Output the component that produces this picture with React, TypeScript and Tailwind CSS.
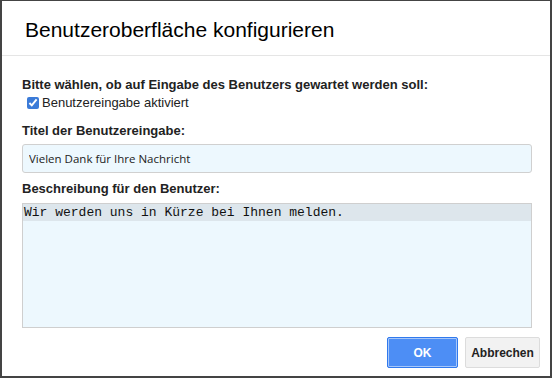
import { useState } from 'react'

export default function App() {
  const [enabled, setEnabled] = useState(true)
  const [title, setTitle] = useState('Vielen Dank für Ihre Nachricht')
  const [desc, setDesc] = useState('Wir werden uns in Kürze bei Ihnen melden.')

  return (
    <div className="w-[552px] h-[378px] bg-white border-2 border-t border-[#444] flex flex-col font-['Liberation_Sans',Arial,sans-serif] text-[#222]">
      {/* Header */}
      <div className="h-[55px] border-b border-[#e5e5e5] flex items-center px-[23px]">
        <h1 className="text-[21px] text-black leading-none pt-[3px]">Benutzeroberfläche konfigurieren</h1>
      </div>

      {/* Body */}
      <div className="flex flex-col px-[20px] pt-[21px]">
        <label className="text-[13px] font-bold leading-[16px]">
          Bitte wählen, ob auf Eingabe des Benutzers gewartet werden soll:
        </label>
        <label className="flex items-center gap-[3px] pl-[5px] mt-[2px] text-[13px] leading-[16px]">
          <input
            type="checkbox"
            checked={enabled}
            onChange={(e) => setEnabled(e.target.checked)}
            className="w-[12px] h-[12px] m-0 accent-[#3b7bd8]"
          />
          Benutzereingabe aktiviert
        </label>

        <label className="text-[13px] font-bold leading-[16px] mt-[12px]">Titel der Benutzereingabe:</label>
        <input
          type="text"
          value={title}
          onChange={(e) => setTitle(e.target.value)}
          className="mt-[5px] w-[510px] h-[29px] px-[6px] rounded-[3px] border border-[#d0d0d0] bg-[#edf8fe] text-[11.5px] text-[#222] font-['Open_Sans',sans-serif] outline-none"
        />

        <label className="text-[13px] font-bold leading-[16px] mt-[8px]">Beschreibung für den Benutzer:</label>
        <div className="mt-[6px] w-[510px] h-[125px] border border-[#cfcfcf] bg-[#edf8fe] relative">
          <div className="h-[17px] bg-[#dde6ec]" />
          <textarea
            value={desc}
            onChange={(e) => setDesc(e.target.value)}
            className="absolute inset-0 w-full h-full resize-none bg-transparent px-[1px] pt-0 text-[13px] leading-[17px] text-[#111] font-['Liberation_Mono',monospace] outline-none"
          />
        </div>
      </div>

      {/* Footer */}
      <div className="flex justify-end gap-[7px] mt-[9px] pr-[10px]">
        <button className="w-[71px] h-[31px] rounded-[2px] border border-[#3079ed] bg-[#4d8ef5] text-white text-[12px] font-bold shadow-[inset_0_0_0_1px_rgba(255,255,255,0.5)]">
          OK
        </button>
        <button className="w-[75px] h-[31px] rounded-[2px] border border-[#dcdcdc] bg-[#f2f2f2] text-[#222] text-[12px] font-bold">
          Abbrechen
        </button>
      </div>
    </div>
  )
}
